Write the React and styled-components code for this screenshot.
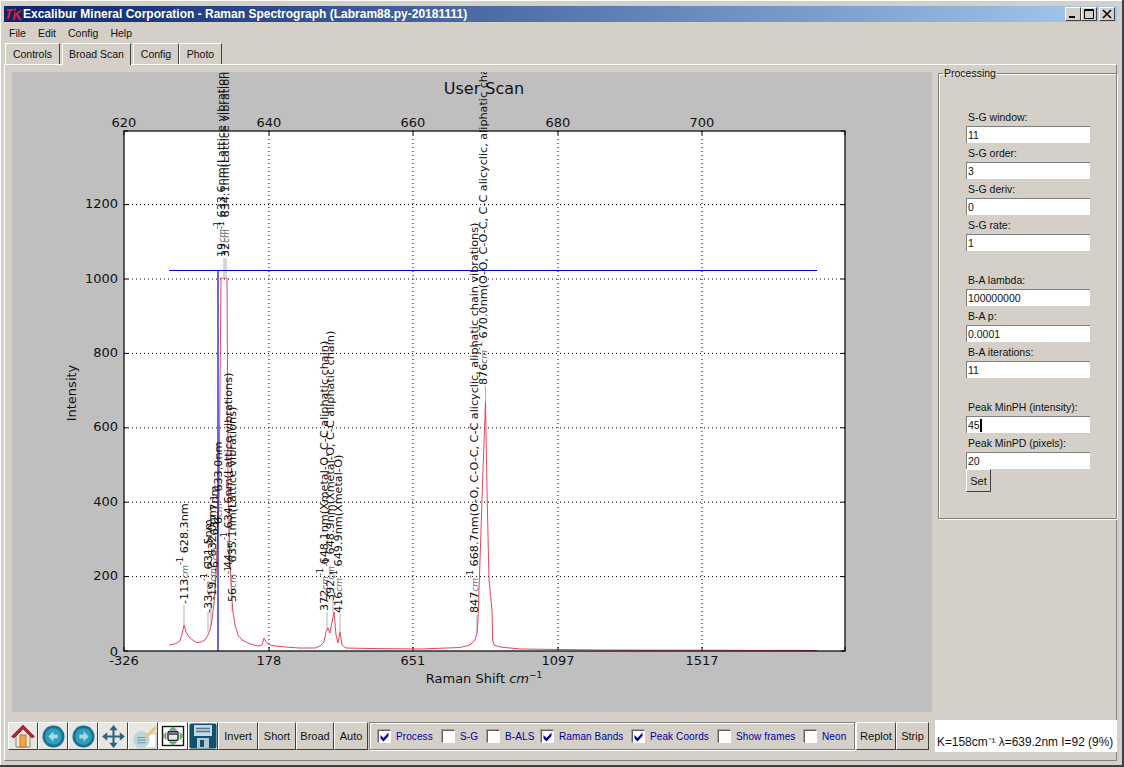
import React from "react";
import styled, { createGlobalStyle } from "styled-components";

const GlobalStyle = createGlobalStyle`
  html, body {
    margin: 0;
    padding: 0;
    background: #d4d0c8;
  }
  body {
    font-family: "Liberation Sans", Arial, sans-serif;
    font-size: 10.5px;
    color: #111;
  }
`;

const Win = styled.div`
  box-sizing: border-box;
  width: 1124px;
  height: 767px;
  padding: 6px 5px 4px 4px;
  background: #d4d0c8;
  border-right: 2px solid #404040;
  border-bottom: 2px solid #404040;
  box-shadow: inset 1px 1px 0 #fff;
  display: flex;
  flex-direction: column;
  overflow: hidden;
`;

const TitleBar = styled.div`
  height: 16px;
  flex: none;
  display: flex;
  align-items: center;
  padding: 0 2px 0 2px;
  background: linear-gradient(90deg, #0a246a 0%, #a6caf0 100%);
  color: #fff;
  font-weight: bold;
  font-size: 12px;
`;

const TitleText = styled.span`
  flex: 1;
`;

const WinButtons = styled.div`
  display: flex;
  gap: 0;
`;

const WinButton = styled.div`
  box-sizing: border-box;
  width: 16px;
  height: 14px;
  margin-left: ${(p) => (p.$gap ? "2px" : "0")};
  background: #d4d0c8;
  border: 1px solid;
  border-color: #fff #404040 #404040 #fff;
  display: flex;
  align-items: center;
  justify-content: center;
`;

const MenuBar = styled.div`
  flex: none;
  height: 21px;
  display: flex;
  align-items: center;
  gap: 12px;
  padding-left: 5px;
`;

const MenuItem = styled.span`
  font-size: 10.5px;
`;

const TabRow = styled.div`
  flex: none;
  height: 21px;
  display: flex;
  align-items: flex-end;
`;

const Tab = styled.div`
  box-sizing: border-box;
  height: ${(p) => (p.$active ? "22px" : "21px")};
  width: ${(p) => p.$w}px;
  margin-left: ${(p) => p.$ml || 0}px;
  margin-bottom: ${(p) => (p.$active ? "-1px" : "0")};
  background: #d4d0c8;
  border: 1px solid;
  border-color: #fff #404040 transparent #fff;
  border-bottom: 0;
  display: flex;
  align-items: center;
  justify-content: center;
  padding-bottom: 1px;
  position: relative;
  z-index: ${(p) => (p.$active ? 2 : 0)};
`;

const TabPanel = styled.div`
  flex: 1;
  min-height: 0;
  border-top: 1px solid #fff;
  border-left: 1px solid #fff;
  border-right: 1px solid #808080;
  border-bottom: 1px solid #808080;
  display: flex;
  flex-direction: column;
  padding: 7px 0 0 7px;
`;

const MainRow = styled.div`
  display: flex;
  gap: 6px;
  height: 640px;
  flex: none;
`;

const PlotBox = styled.div`
  width: 920px;
  height: 640px;
  flex: none;
  background: #bfbfbf;
`;

const PlotSvg = styled.svg`
  display: block;
`;

const Frame = styled.fieldset`
  box-sizing: border-box;
  margin: -5px 0 0 0;
  width: 179px;
  height: 452px;
  flex: none;
  padding: 28px 0 0 27px;
  border: 1px solid #808080;
  box-shadow: 1px 1px 0 #fff, inset 1px 1px 0 #fff;
  display: block;
`;

const FrameTitle = styled.legend`
  padding: 0 1px;
  margin-left: -23px;
  font-size: 10.5px;
  line-height: 12px;
`;

const FieldGroup = styled.div`
  margin-bottom: 19px;
`;

const FieldLabel = styled.label`
  display: block;
  height: 19px;
  line-height: 20px;
  padding-left: 2px;
  font-size: 10.5px;
`;

const FieldInput = styled.div`
  box-sizing: border-box;
  width: 124px;
  height: 17px;
  padding-left: 1px;
  line-height: 16px;
  font-size: 10.5px;
  background: #fff;
  border-left: 1px solid #808080;
  border-top: 1px solid #808080;
`;

const Caret = styled.span`
  display: inline-block;
  width: 2px;
  height: 13px;
  vertical-align: -3px;
  background: #000;
`;

const RaisedButton = styled.div`
  box-sizing: border-box;
  height: 28px;
  width: ${(p) => p.$w}px;
  flex: none;
  background: #d4d0c8;
  border: 1px solid;
  border-color: #fff #404040 #404040 #fff;
  display: flex;
  align-items: center;
  justify-content: center;
  font-size: 11px;
`;

const SetButton = styled(RaisedButton)`
  height: 23px;
  margin-top: -19px;
`;

const BottomRow = styled.div`
  display: flex;
  align-items: center;
  margin: 8px 0 0 -4px;
  height: 32px;
`;

const IconButton = styled(RaisedButton)`
  width: 30px;
  padding: 0;
  background: ${(p) => p.$bg || "#e8e6e0"};
`;

const CheckGroup = styled.div`
  box-sizing: border-box;
  height: 28px;
  width: 486px;
  margin: 0 1px;
  flex: none;
  display: flex;
  align-items: center;
  padding-left: 8px;
  border: 1px solid #808080;
  box-shadow: inset 1px 1px 0 #fff, 1px 1px 0 #fff;
`;

const CheckItem = styled.div`
  width: ${(p) => p.$w}px;
  flex: none;
  display: flex;
  align-items: center;
  gap: 5px;
`;

const CheckBox = styled.span`
  box-sizing: border-box;
  width: 13px;
  height: 13px;
  flex: none;
  background: #fff;
  border: 1px solid;
  border-color: #606060 #fff #fff #606060;
  box-shadow: -1px -1px 0 #a0a0a0;
  display: flex;
  align-items: center;
  justify-content: center;
`;

const CheckLabel = styled.span`
  color: #0000a0;
  font-size: 10px;
  letter-spacing: 0.1px;
  white-space: nowrap;
`;

const Status = styled.div`
  box-sizing: border-box;
  width: 182px;
  height: 32px;
  margin-left: 6px;
  padding: 14px 0 0 2px;
  flex: none;
  background: #fff;
  font-size: 11.9px;
  white-space: nowrap;
  line-height: 16px;
`;

const X0 = 124;
const X1 = 845;
const Y0 = 651;
const Y1 = 131;
const gridX = [269, 413, 558, 702];
const gridY = [576.6, 502.2, 427.8, 353.4, 279, 204.6];
const yLabels = ["200", "400", "600", "800", "1000", "1200"];
const topLabels = ["620", "640", "660", "680", "700"];
const bottomLabels = ["-326", "178", "651", "1097", "1517"];

const spectrum =
  "169,645 172,644.5 176,643.5 180,641 182,634 184,625 186,632 189,637 194,641 197,642.5 201,642 205,640 208,635 210,630 212,620 214,603 216,575 219,500 221,278 227,278 228,480 230,565 232,600 233,612 235,625 238,635 242,640 248,643 254,645 258,646 262,645 264,638 266,642 270,645 275,646 285,647 300,648 315,648 320,646 324,642 326,632 328,628 330,633 332,622 334,612 336,635 338,643 340,632 342,645 346,648 370,648.5 420,649 460,647.5 470,645 475,640 477,633 478,620 480,560 483,470 485.5,402 487,490 489,580 492,610 492.7,640 494,645 500,647 520,649 600,650 817,650.5";

const peaks = [
  { x: 184, y: 625, top: 605, bx: 188, by: 604, k: "-113", rest: " 628.3nm" },
  { x: 208, y: 632, top: 612, bx: 212, by: 613, k: "-33", rest: " 631.5nm" },
  { x: 211, y: 625, top: 600, bx: 216, by: 600, k: "-19", rest: " 632.0nm" },
  { x: 215, y: 590, top: 572, bx: 218, by: 572, k: "-6", rest: " 632.7nm" },
  { x: 218, y: 520, top: 500, bx: 222, by: 524, k: "6", rest: " 633.0nm" },
  { x: 224, y: 277, top: 258, bx: 225, by: 257, k: "19", rest: " 633.6nm(Lattice vibrations)" },
  { x: 226, y: 277, top: 258, bx: 229, by: 257, k: "32", rest: " 634.1nm(Lattice vibrations)" },
  { x: 229, y: 520, top: 568, bx: 232, by: 568, k: "44", rest: " 634.6nm(Lattice vibrations)" },
  { x: 232, y: 612, top: 604, bx: 236, by: 602, k: "56", rest: " 635.1nm(Lattice vibrations)" },
  { x: 327, y: 630, top: 612, bx: 328, by: 611, k: "372", rest: " 648.1nm(Xmetal-O, C-C aliphatic chain)" },
  { x: 333, y: 612, top: 600, bx: 334, by: 601, k: "392", rest: " 648.9nm(Xmetal-O, C-C aliphatic chain)" },
  { x: 340, y: 632, top: 614, bx: 342, by: 613, k: "416", rest: " 649.9nm(Xmetal-O)" },
  { x: 477, y: 633, top: 615, bx: 478, by: 613, k: "847", rest: " 668.7nm(O-O, C-O-C, C-C alicyclic, aliphatic chain vibrations)" },
  { x: 485.5, y: 402, top: 386, bx: 487, by: 385, k: "876", rest: " 670.0nm(O-O, C-O-C, C-C alicyclic, aliphatic chain vibrations)" },
];

const PeakLabel = ({ bx, by, k, rest }) => (
  <text
    transform={`translate(${bx} ${by}) rotate(-90)`}
    fontSize="11.2"
    fontFamily="'DejaVu Sans', sans-serif"
    fill="#111"
  >
    {k}
    <tspan fontStyle="italic" fontSize="9" fill="#666">cm</tspan>
    <tspan fontSize="8" dy="-5">-1</tspan>
    <tspan dy="5">{rest}</tspan>
  </text>
);

const Plot = () => (
  <PlotSvg width="920" height="640" viewBox="12 72 920 640">
    <rect x={X0} y={Y1} width={X1 - X0} height={Y0 - Y1} fill="#fff" />
    {gridX.map((x) => (
      <line key={x} x1={x} x2={x} y1={Y1} y2={Y0} stroke="#000" strokeWidth="1" strokeDasharray="1 3" />
    ))}
    {gridY.map((y) => (
      <line key={y} x1={X0} x2={X1} y1={y} y2={y} stroke="#000" strokeWidth="1" strokeDasharray="1 3" />
    ))}
    {[X0, ...gridX, X1].map((x) => (
      <g key={x}>
        <line x1={x} x2={x} y1={Y0} y2={Y0 - 4} stroke="#000" />
        <line x1={x} x2={x} y1={Y1} y2={Y1 + 4} stroke="#000" />
      </g>
    ))}
    {[Y0, ...gridY, Y1].map((y) => (
      <g key={y}>
        <line x1={X0} x2={X0 + 4} y1={y} y2={y} stroke="#000" />
        <line x1={X1} x2={X1 - 4} y1={y} y2={y} stroke="#000" />
      </g>
    ))}
    {peaks.map((p) => (
      <line key={p.k} x1={p.x} x2={p.x} y1={p.y} y2={p.top} stroke="#b0b0b0" strokeWidth="1" />
    ))}
    <polyline points={spectrum} fill="none" stroke="#e8304a" strokeWidth="0.9" />
    <line x1="169" x2="817" y1="270.5" y2="270.5" stroke="#0000c8" strokeWidth="1" />
    <line x1="218" x2="218" y1="270" y2="651" stroke="#0000c8" strokeWidth="1.2" />
    {peaks.map((p) => (
      <PeakLabel key={p.k} {...p} />
    ))}
    <rect x={X0} y={Y1} width={X1 - X0} height={Y0 - Y1} fill="none" stroke="#000" strokeWidth="1.2" />
    <g fontFamily="'DejaVu Sans', sans-serif" fontSize="13" fill="#111">
      {topLabels.map((t, i) => (
        <text key={t} x={[X0, ...gridX][i]} y="127" textAnchor="middle">{t}</text>
      ))}
      {bottomLabels.map((t, i) => (
        <text key={t} x={[X0, ...gridX][i]} y="665" textAnchor="middle">{t}</text>
      ))}
      <text x="118" y="655.5" textAnchor="end">0</text>
      {yLabels.map((t, i) => (
        <text key={t} x="118" y={gridY[i] + 3.5} textAnchor="end">{t}</text>
      ))}
      <text transform="translate(76 393) rotate(-90)" textAnchor="middle">Intensity</text>
      <text x="484" y="683" textAnchor="middle">
        Raman Shift <tspan fontStyle="italic">cm</tspan>
        <tspan fontSize="9" dy="-5">−1</tspan>
      </text>
      <text x="484" y="94" textAnchor="middle" fontSize="16">User Scan</text>
    </g>
  </PlotSvg>
);

const HomeIcon = () => (
  <svg width="26" height="26" viewBox="0 0 26 26">
    <path d="M6 12v12h14V12" fill="#eee6d6" stroke="#8a8578" />
    <rect x="10" y="12" width="6" height="12" fill="#eea84a" stroke="#b8772a" />
    <path d="M1.500 13.500 13 2l11.500 11.500-2.500 1.500L13 6 4 15z" fill="#a8283c" stroke="#7a1626" strokeWidth="0.600" />
  </svg>
);

const RoundArrow = ({ flip }) => (
  <svg width="23" height="23" viewBox="0 0 22 22">
    <circle cx="11" cy="11" r="10.500" fill="#1a6f92" />
    <circle cx="11" cy="11" r="8" fill="#2f9dbb" />
    <path
      d={flip ? "M16 11l-5-5v3H7v4h4v3z" : "M6 11l5-5v3h4v4h-4v3z"}
      fill="#a8dae6"
    />
  </svg>
);

const MoveIcon = () => (
  <svg width="25" height="25" viewBox="0 0 24 24" fill="#2d6180">
    <path d="M12 1l4 5h-3v5h5V8l5 4-5 4v-3h-5v5h3l-4 5-4-5h3v-5H6v3l-5-4 5-4v3h5V6H8z" />
  </svg>
);

const NoteIcon = () => (
  <svg width="27" height="25" viewBox="0 0 26 24">
    <rect x="7" y="9" width="18" height="14" fill="#fff" stroke="#c0c8cc" />
    <circle cx="11" cy="15" r="8" fill="#b9d6dd" />
    <path d="M7 13h8M7 15.500h8M7 18h8" stroke="#7e9aa5" />
    <path d="M14 12 24 2l2 2-10 10z" fill="#eac57c" />
  </svg>
);

const ZoomIcon = () => (
  <svg width="26" height="26" viewBox="0 0 26 26">
    <rect x="2.500" y="3.500" width="21" height="19" fill="#fff" stroke="#111" strokeWidth="1.400" />
    <rect x="8" y="8.500" width="10" height="9" rx="1.500" fill="#e4e4ee" stroke="#222" strokeWidth="1.400" />
    <rect x="9" y="9.500" width="8" height="2.500" fill="#6a5a80" />
    <path d="M13 3.500l3.500 3.500h-7zM13 22.500l-3.500-3.500h7zM2.500 13l3.500-3.500v7zM23.500 13 20 16.500v-7z" fill="#6cc070" stroke="#2f7a3a" strokeWidth="0.500" />
  </svg>
);

const SaveIcon = () => (
  <svg width="28" height="26" viewBox="0 0 28 26">
    <rect x="0.500" y="0.500" width="27" height="25" rx="2" fill="#12506f" />
    <rect x="5" y="2" width="18" height="11" fill="#c9d9e2" />
    <path d="M7 5.500h14M7 8.500h14" stroke="#4a7a94" strokeWidth="1.500" />
    <rect x="8" y="15" width="12" height="10" fill="#b4c8d4" />
    <rect x="11" y="17" width="4" height="7" fill="#12506f" />
  </svg>
);

const Check = () => (
  <svg width="11" height="11" viewBox="0 0 11 11">
    <path d="M1.500 4l3 3L9.500 1.500v3.500L4.500 10.500 1.500 7.500z" fill="#0000a8" />
  </svg>
);

const checks = [
  { label: "Process", on: true, w: 64 },
  { label: "S-G", w: 45 },
  { label: "B-ALS", w: 54 },
  { label: "Raman Bands", on: true, w: 91 },
  { label: "Peak Coords", on: true, w: 86 },
  { label: "Show frames", w: 86 },
  { label: "Neon", w: 44 },
];

const groups = [
  [["S-G window:", "11"], ["S-G order:", "3"], ["S-G deriv:", "0"], ["S-G rate:", "1"]],
  [["B-A lambda:", "100000000"], ["B-A p:", "0.0001"], ["B-A iterations:", "11"]],
  [["Peak MinPH (intensity):", "45", true], ["Peak MinPD (pixels):", "20"]],
];

const TkLogo = () => (
  <svg width="17" height="14" viewBox="0 0 17 14">
    <path d="M1 2h8L7 4H5L3 12H1l2-8H1zM9 1l-2 12h2l1-5 3 5h3l-4-6 4-4h-2L9 7l1-6z" fill="#e02030" />
  </svg>
);

const App = () => (
  <Win>
    <GlobalStyle />
    <TitleBar>
      <TkLogo />
      <TitleText>Excalibur Mineral Corporation - Raman Spectrograph (Labram88.py-20181111)</TitleText>
      <WinButtons>
        <WinButton>
          <svg width="10" height="10" viewBox="0 0 10 10"><rect x="1" y="7" width="6" height="2" fill="#000" /></svg>
        </WinButton>
        <WinButton>
          <svg width="10" height="10" viewBox="0 0 10 10"><path d="M0.500 0.500h9v9h-9zM0.500 1.500h9" fill="none" stroke="#000" /></svg>
        </WinButton>
        <WinButton $gap>
          <svg width="10" height="10" viewBox="0 0 10 10"><path d="M1 1l8 8M9 1l-8 8" stroke="#000" strokeWidth="1.600" /></svg>
        </WinButton>
      </WinButtons>
    </TitleBar>
    <MenuBar>
      <MenuItem>File</MenuItem>
      <MenuItem>Edit</MenuItem>
      <MenuItem>Config</MenuItem>
      <MenuItem>Help</MenuItem>
    </MenuBar>
    <TabRow>
      <Tab $w={55} $ml={1}>Controls</Tab>
      <Tab $w={69} $ml={2} $active>Broad Scan</Tab>
      <Tab $w={46} $ml={2}>Config</Tab>
      <Tab $w={43}>Photo</Tab>
    </TabRow>
    <TabPanel>
      <MainRow>
        <PlotBox>
          <Plot />
        </PlotBox>
        <Frame>
          <FrameTitle>Processing</FrameTitle>
          {groups.map((fields, g) => (
            <FieldGroup key={g}>
              {fields.map(([label, value, caret]) => (
                <div key={label}>
                  <FieldLabel>{label}</FieldLabel>
                  <FieldInput>
                    {value}
                    {caret && <Caret />}
                  </FieldInput>
                </div>
              ))}
            </FieldGroup>
          ))}
          <SetButton $w={25}>Set</SetButton>
        </Frame>
      </MainRow>
      <BottomRow>
        <IconButton><HomeIcon /></IconButton>
        <IconButton><RoundArrow /></IconButton>
        <IconButton><RoundArrow flip /></IconButton>
        <IconButton><MoveIcon /></IconButton>
        <IconButton><NoteIcon /></IconButton>
        <IconButton $bg="#fff"><ZoomIcon /></IconButton>
        <IconButton><SaveIcon /></IconButton>
        <RaisedButton $w={40}>Invert</RaisedButton>
        <RaisedButton $w={38}>Short</RaisedButton>
        <RaisedButton $w={38}>Broad</RaisedButton>
        <RaisedButton $w={34}>Auto</RaisedButton>
        <CheckGroup>
          {checks.map((c) => (
            <CheckItem key={c.label} $w={c.w}>
              <CheckBox>{c.on && <Check />}</CheckBox>
              <CheckLabel>{c.label}</CheckLabel>
            </CheckItem>
          ))}
        </CheckGroup>
        <RaisedButton $w={40}>Replot</RaisedButton>
        <RaisedButton $w={33}>Strip</RaisedButton>
        <Status>K=158cm⁻¹ λ=639.2nm I=92 (9%)</Status>
      </BottomRow>
    </TabPanel>
  </Win>
);

export default App;
